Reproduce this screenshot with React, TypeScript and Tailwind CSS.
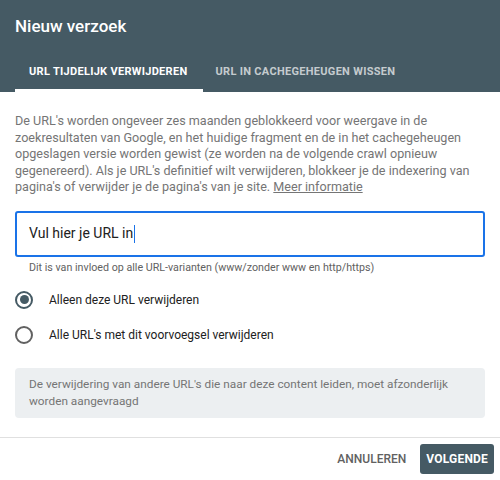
export default function App() {
  return (
    <div className="w-[500px] h-[480px] bg-white flex flex-col overflow-hidden font-['Roboto','Liberation_Sans',sans-serif]">
      <div className="bg-[#455a64] flex flex-col flex-shrink-0">
        <h1 className="px-[15px] pt-[13px] h-[53px] text-[17px] font-medium text-white leading-[26px]">Nieuw verzoek</h1>
        <div className="flex px-[15px] h-[39px]">
          <div className="pl-[14px] pr-[15px] flex items-center border-b-[3px] border-white pt-[3px] text-[11px] font-bold tracking-[0.3px] text-white">
            URL TIJDELIJK VERWIJDEREN
          </div>
          <div className="px-[13px] flex items-center border-b-[3px] border-transparent pt-[3px] text-[11px] font-bold tracking-[0.3px] text-white/70">
            URL IN CACHEGEHEUGEN WISSEN
          </div>
        </div>
      </div>

      <div className="flex-1 flex flex-col px-[15px] pt-[21px]">
        <p className="text-[12.6px] leading-[16.6px] text-[#757575]">
          De URL's worden ongeveer zes maanden geblokkeerd voor weergave in de zoekresultaten van Google, en het huidige fragment en de in het cachegeheugen opgeslagen versie worden gewist (ze worden na de volgende crawl opnieuw gegenereerd). Als je URL's definitief wilt verwijderen, blokkeer je de indexering van pagina's of verwijder je de pagina's van je site.{" "}
          <a className="underline text-[#757575]">Meer informatie</a>
        </p>

        <div className="mt-[15px] h-[46px] border-2 border-[#1a73e8] rounded-[3px] flex items-center px-[12px]">
          <span className="text-[14px] text-[#212121]">Vul hier je URL in</span>
          <span className="w-px h-[18px] bg-[#1a73e8] ml-px" />
        </div>
        <p className="mt-[4px] px-[14px] text-[10.7px] leading-[14px] text-[#616161]">
          Dit is van invloed op alle URL-varianten (www/zonder www en http/https)
        </p>

        <div className="mt-[16px] flex flex-col gap-[17px]">
          <label className="flex items-center gap-[16px] h-[18px]">
            <span className="w-[18px] h-[18px] rounded-full border-2 border-[#455a64] flex items-center justify-center">
              <span className="w-[9px] h-[9px] rounded-full bg-[#455a64]" />
            </span>
            <span className="text-[12px] text-[#212121]">Alleen deze URL verwijderen</span>
          </label>
          <label className="flex items-center gap-[16px] h-[18px]">
            <span className="w-[18px] h-[18px] rounded-full border-2 border-[#616161]" />
            <span className="text-[12px] text-[#212121]">Alle URL's met dit voorvoegsel verwijderen</span>
          </label>
        </div>

        <div className="mt-[24px] bg-[#eceff1] rounded-[4px] px-[14px] py-[8px] text-[11.8px] leading-[17px] text-[#757575]">
          De verwijdering van andere URL's die naar deze content leiden, moet afzonderlijk worden aangevraagd
        </div>
      </div>

      <div className="border-t border-[#e0e0e0] h-[43px] flex items-center justify-end gap-[14px] pr-[6px] flex-shrink-0">
        <button className="text-[12px] font-medium text-[#616161]">ANNULEREN</button>
        <button className="h-[30px] px-[6px] bg-[#455a64] rounded-[3px] text-[12px] font-bold text-white tracking-[0.2px]">VOLGENDE</button>
      </div>
    </div>
  );
}
